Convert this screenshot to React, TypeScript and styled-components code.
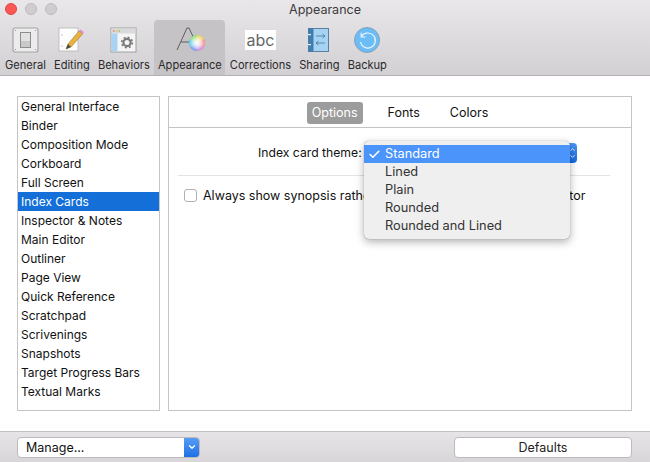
import { FC } from 'react';
import styled, { createGlobalStyle } from 'styled-components';
import { Check, ChevronDown, ChevronUp } from 'lucide-react';

const GlobalStyle = createGlobalStyle`
  html, body {
    margin: 0;
    padding: 0;
    background: #fff;
  }
  body {
    font-family: Inter, "Liberation Sans", sans-serif;
    font-size: 12.5px;
    color: #111;
  }
`;

const Window = styled.div`
  width: 650px;
  height: 462px;
  display: flex;
  flex-direction: column;
  overflow: hidden;
  background: #fff;
`;

const Header = styled.div`
  height: 76px;
  flex: none;
  display: flex;
  flex-direction: column;
  background: linear-gradient(#e9e7e9, #d2d0d2);
  border-bottom: 1px solid #b3b1b3;
  box-sizing: border-box;
`;

const TitleBar = styled.div`
  height: 18px;
  flex: none;
  position: relative;
  display: flex;
  align-items: center;
  justify-content: center;
  font-size: 12.5px;
  color: #3c3a3c;
`;

const Lights = styled.div`
  position: absolute;
  left: 5px;
  top: 3px;
  display: flex;
  gap: 8px;
`;

const Light = styled.span<{ $color: string; $edge: string }>`
  width: 12px;
  height: 12px;
  border-radius: 50%;
  background: ${({ $color }) => $color};
  border: 0.5px solid ${({ $edge }) => $edge};
  box-sizing: border-box;
`;

const Toolbar = styled.div`
  flex: 1;
  display: flex;
  gap: 8.1px;
  padding: 2px 0 0 5px;
`;

const ToolItem = styled.div<{ $active?: boolean }>`
  display: flex;
  flex-direction: column;
  align-items: center;
  justify-content: flex-end;
  padding: 0 ${({ $active }) => ($active ? '3.5px' : '0')} 3px;
  margin: 0 ${({ $active }) => ($active ? '-3.5px' : '0')};
  border-radius: 4px 4px 0 0;
  background: ${({ $active }) => ($active ? '#c5c3c5' : 'transparent')};
  white-space: nowrap;
`;

const ToolIcon = styled.div`
  height: 36px;
  display: flex;
  align-items: center;
  justify-content: center;
`;

const ToolLabel = styled.span`
  font-size: 11.1px;
  line-height: 14px;
  color: #2b292b;
`;

const Content = styled.div`
  flex: 1;
  display: flex;
  gap: 8px;
  padding: 20px 18px 20px 17px;
  min-height: 0;
`;

const Sidebar = styled.ul`
  width: 143px;
  flex: none;
  margin: 0;
  padding: 0;
  list-style: none;
  border: 1px solid #c4c4c4;
  box-sizing: border-box;
`;

const SidebarRow = styled.li<{ $selected?: boolean }>`
  height: 19px;
  line-height: 19px;
  padding-left: 3px;
  font-size: 12px;
  background: ${({ $selected }) => ($selected ? '#1470d8' : 'transparent')};
  color: ${({ $selected }) => ($selected ? '#fff' : '#111')};
`;

const Panel = styled.div`
  flex: 1;
  position: relative;
  border: 1px solid #c4c4c4;
  box-sizing: border-box;
`;

const Tabs = styled.div`
  height: 31px;
  display: flex;
  align-items: center;
  justify-content: center;
  gap: 6px;
  padding: 1px 0 0 7px;
  border-bottom: 1px solid #c4c4c4;
  box-sizing: border-box;
`;

const Tab = styled.div<{ $active?: boolean }>`
  height: 22px;
  line-height: 22px;
  padding: 0 ${({ $active }) => ($active ? '5px' : '12px')};
  margin-right: ${({ $active }) => ($active ? '7px' : '0')};
  border-radius: 3px;
  background: ${({ $active }) => ($active ? '#9c9c9c' : 'transparent')};
  color: ${({ $active }) => ($active ? '#fff' : '#111')};
`;

const ThemeRow = styled.div`
  height: 48px;
  margin: 0 21px 0 9px;
  display: flex;
  align-items: center;
  border-bottom: 1px solid #e3e3e3;
  box-sizing: border-box;
  padding: 2px 33px 0 80px;
  font-size: 12.2px;
`;

const PopupButton = styled.div`
  width: 200px;
  height: 20px;
  margin-left: auto;
  border-radius: 4px;
  background: linear-gradient(#4a95f6, #1569e0);
  display: flex;
  justify-content: flex-end;
  align-items: center;
  color: #fff;
  padding-right: 1px;
  box-sizing: border-box;
`;

const Stepper = styled.div`
  display: flex;
  flex-direction: column;
  line-height: 0;
`;

const OptionRow = styled.label`
  display: flex;
  align-items: center;
  gap: 6px;
  margin: 12px 0 0 15px;
  white-space: nowrap;
`;

const CheckBox = styled.span`
  width: 13px;
  height: 13px;
  margin-top: -1px;
  border: 1px solid #b0b0b0;
  border-radius: 3px;
  background: #fff;
  box-sizing: border-box;
`;

const Menu = styled.div`
  position: absolute;
  left: 195px;
  top: 44px;
  width: 206px;
  height: 98px;
  padding: 4px 0;
  box-sizing: border-box;
  background: #efefef;
  border-radius: 5px;
  font-size: 12.8px;
  box-shadow: 0 0 1px rgba(0, 0, 0, 0.45), 0 3px 9px rgba(0, 0, 0, 0.3);
`;

const MenuRow = styled.div<{ $selected?: boolean }>`
  height: 18px;
  display: flex;
  align-items: center;
  padding-bottom: 2px;
  box-sizing: border-box;
  background: ${({ $selected }) => ($selected ? '#4a94fb' : 'transparent')};
  color: ${({ $selected }) => ($selected ? '#fff' : '#333')};
`;

const MenuCheck = styled.span`
  width: 21px;
  flex: none;
  display: flex;
  justify-content: center;
  padding-top: 2px;
  box-sizing: border-box;
`;

const Footer = styled.div`
  height: 31px;
  flex: none;
  display: flex;
  align-items: center;
  justify-content: space-between;
  padding: 0 18px 0 17px;
  background: linear-gradient(#e6e4e6, #d8d6d8);
  border-top: 1px solid #c2c0c2;
  box-sizing: border-box;
`;

const ManageSelect = styled.div`
  width: 183px;
  height: 21px;
  display: flex;
  background: #fff;
  border: 1px solid #bcbabc;
  border-radius: 4px;
  box-sizing: border-box;
  overflow: hidden;
`;

const ManageLabel = styled.span`
  flex: 1;
  line-height: 19px;
  padding-left: 8px;
`;

const ManageArrow = styled.span`
  width: 16px;
  margin: -1px -1px -1px 0;
  display: flex;
  align-items: center;
  justify-content: center;
  background: linear-gradient(#5a9ff7, #1a6de2);
  color: #fff;
`;

const DefaultsButton = styled.button`
  width: 178px;
  height: 21px;
  padding: 0;
  border: 1px solid #bcbabc;
  border-radius: 4px;
  background: #fff;
  font: inherit;
  color: #222;
`;

const GeneralIcon: FC = () => (
  <svg width="27" height="27" viewBox="0 0 27 27">
    <rect x="1" y="1" width="25" height="24" rx="2" fill="#ececec" stroke="#a5a5a5" strokeWidth="1.2" />
    <rect x="8.5" y="5.5" width="10" height="15" fill="#e2e2e2" stroke="#8d8d8d" />
    <rect x="9" y="14" width="9" height="6" fill="#c9c9c9" />
    <g fill="#8d8d8d">
      <circle cx="3.5" cy="3.5" r="0.6" />
      <circle cx="23.5" cy="3.5" r="0.6" />
      <circle cx="3.5" cy="22.5" r="0.6" />
      <circle cx="23.5" cy="22.5" r="0.6" />
    </g>
  </svg>
);

const EditingIcon: FC = () => (
  <svg width="27" height="27" viewBox="0 0 27 27">
    <rect x="1" y="1" width="19" height="23" fill="#fdfdfd" stroke="#b5b5b5" strokeWidth="0.8" />
    <circle cx="4" cy="8" r="0.5" fill="#777" />
    <circle cx="4" cy="19" r="0.5" fill="#777" />
    <path d="M8 22 L10 17 L21 4 L24.5 7 L13 20 Z" fill="#e9b23f" stroke="#9a7a30" strokeWidth="0.6" />
    <path d="M8 22 L10 17 L13 20 Z" fill="#4a4a4a" />
    <path d="M21 4 L22.5 2.4 L26 5.3 L24.5 7 Z" fill="#df8fc3" />
  </svg>
);

const BehaviorsIcon: FC = () => (
  <svg width="27" height="27" viewBox="0 0 27 27">
    <rect x="1" y="1" width="25" height="24" fill="#f5f5f5" stroke="#a0a0a0" />
    <rect x="1.5" y="1.5" width="24" height="5" fill="#dadada" />
    <rect x="1.5" y="6.5" width="6" height="18" fill="#a9d3f5" />
    <circle cx="3.8" cy="4" r="0.9" fill="#e0837a" />
    <circle cx="6.6" cy="4" r="0.9" fill="#e3c26c" />
    <circle cx="9.4" cy="4" r="0.9" fill="#8fcc7f" />
    <circle cx="17" cy="15.5" r="3.6" fill="none" stroke="#7b7b7b" strokeWidth="2.2" />
    <circle cx="17" cy="15.5" r="5.3" fill="none" stroke="#7b7b7b" strokeWidth="1.6" strokeDasharray="2 2.16" />
  </svg>
);

const AppearanceIcon: FC = () => (
  <svg width="30" height="30" viewBox="0 0 30 30">
    <defs>
      <radialGradient id="wheelCore">
        <stop offset="0" stopColor="#fff" />
        <stop offset="0.45" stopColor="#fff" stopOpacity="0.7" />
        <stop offset="1" stopColor="#fff" stopOpacity="0" />
      </radialGradient>
    </defs>
    <path d="M2 25 L12 3 L14 3 L21 18 M6 17 H17" fill="none" stroke="#5e5e5e" strokeWidth="1" />
    <path d="M22 18 L22 10 A8 8 0 0 1 29 14 Z" fill="#f1cf5c" />
    <path d="M22 18 L29 14 A8 8 0 0 1 29 22 Z" fill="#ef8f8f" />
    <path d="M22 18 L29 22 A8 8 0 0 1 22 26 Z" fill="#d583da" />
    <path d="M22 18 L22 26 A8 8 0 0 1 15 22 Z" fill="#6f9bee" />
    <path d="M22 18 L15 22 A8 8 0 0 1 15 14 Z" fill="#5fcbe4" />
    <path d="M22 18 L15 14 A8 8 0 0 1 22 10 Z" fill="#8fdc7c" />
    <circle cx="22" cy="18" r="8" fill="url(#wheelCore)" />
  </svg>
);

const CorrectionsTile = styled.div`
  width: 31px;
  height: 20px;
  background: #fff;
  color: #666;
  font-size: 16px;
  line-height: 20px;
  text-align: center;
`;

const SharingIcon: FC = () => (
  <svg width="22" height="26" viewBox="0 0 22 26">
    <rect x="0.5" y="1.5" width="20" height="23" fill="#a6d3f4" stroke="#5b7f9c" />
    <rect x="0.5" y="1.5" width="5" height="23" fill="#3f7fae" />
    <rect x="0" y="7" width="3" height="1.2" fill="#e8f2fa" />
    <rect x="0" y="17" width="3" height="1.2" fill="#e8f2fa" />
    <path d="M8 9 H17 M14.5 7 L17 9 L14.5 11 M17 16 H8 M10.5 14 L8 16 L10.5 18" fill="none" stroke="#4d7fa4" strokeWidth="0.9" />
  </svg>
);

const BackupIcon: FC = () => (
  <svg width="26" height="26" viewBox="0 0 26 26">
    <circle cx="13" cy="13" r="12.5" fill="#6cbcf6" stroke="#7b97ab" strokeWidth="0.8" />
    <path d="M7.5 9.5 A7.5 7.5 0 1 1 6.5 15" fill="none" stroke="#eaf6ff" strokeWidth="1.2" />
    <path d="M7.2 5.8 L7.2 10 L11.4 10" fill="none" stroke="#eaf6ff" strokeWidth="1.2" />
  </svg>
);

const TOOLS = [
  { label: 'General', icon: <GeneralIcon /> },
  { label: 'Editing', icon: <EditingIcon /> },
  { label: 'Behaviors', icon: <BehaviorsIcon /> },
  { label: 'Appearance', icon: <AppearanceIcon />, active: true },
  { label: 'Corrections', icon: <CorrectionsTile>abc</CorrectionsTile> },
  { label: 'Sharing', icon: <SharingIcon /> },
  { label: 'Backup', icon: <BackupIcon /> },
];

const SECTIONS = [
  'General Interface',
  'Binder',
  'Composition Mode',
  'Corkboard',
  'Full Screen',
  'Index Cards',
  'Inspector & Notes',
  'Main Editor',
  'Outliner',
  'Page View',
  'Quick Reference',
  'Scratchpad',
  'Scrivenings',
  'Snapshots',
  'Target Progress Bars',
  'Textual Marks',
];

const THEMES = ['Standard', 'Lined', 'Plain', 'Rounded', 'Rounded and Lined'];

export default function App() {
  return (
    <Window>
      <GlobalStyle />
      <Header>
        <TitleBar>
          <Lights>
            <Light $color="#fc5753" $edge="#df4744" />
            <Light $color="#cfcdcf" $edge="#bdbbbd" />
            <Light $color="#cfcdcf" $edge="#bdbbbd" />
          </Lights>
          Appearance
        </TitleBar>
        <Toolbar>
          {TOOLS.map((tool) => (
            <ToolItem key={tool.label} $active={tool.active}>
              <ToolIcon>{tool.icon}</ToolIcon>
              <ToolLabel>{tool.label}</ToolLabel>
            </ToolItem>
          ))}
        </Toolbar>
      </Header>
      <Content>
        <Sidebar>
          {SECTIONS.map((name) => (
            <SidebarRow key={name} $selected={name === 'Index Cards'}>
              {name}
            </SidebarRow>
          ))}
        </Sidebar>
        <Panel>
          <Tabs>
            <Tab $active>Options</Tab>
            <Tab>Fonts</Tab>
            <Tab>Colors</Tab>
          </Tabs>
          <ThemeRow>
            Index card theme:
            <PopupButton>
              <Stepper>
                <ChevronUp size={7} strokeWidth={3} />
                <ChevronDown size={7} strokeWidth={3} />
              </Stepper>
            </PopupButton>
          </ThemeRow>
          <OptionRow>
            <CheckBox />
            Always show synopsis rather than main text in index cards editor
          </OptionRow>
          <Menu>
            {THEMES.map((theme, i) => (
              <MenuRow key={theme} $selected={i === 0}>
                <MenuCheck>{i === 0 && <Check size={13} strokeWidth={3} />}</MenuCheck>
                {theme}
              </MenuRow>
            ))}
          </Menu>
        </Panel>
      </Content>
      <Footer>
        <ManageSelect>
          <ManageLabel>Manage...</ManageLabel>
          <ManageArrow>
            <ChevronDown size={10} strokeWidth={3} />
          </ManageArrow>
        </ManageSelect>
        <DefaultsButton type="button">Defaults</DefaultsButton>
      </Footer>
    </Window>
  );
}
